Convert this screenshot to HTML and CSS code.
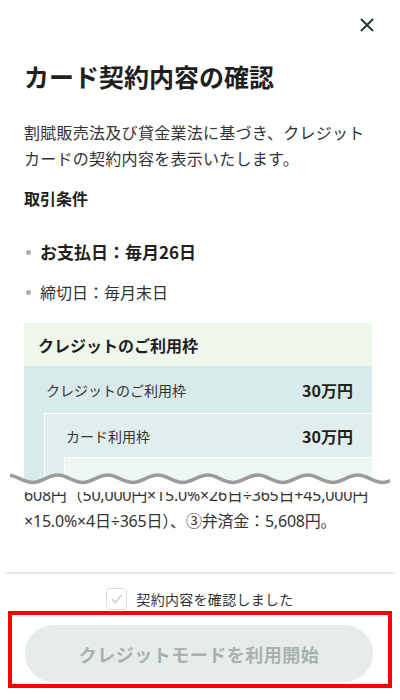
FILE: index.html
```html
<!DOCTYPE html>
<html lang="ja">
<head>
<meta charset="utf-8">
<title>カード契約内容の確認</title>
<link rel="stylesheet" href="styles.css">
</head>
<body>
<div class="sheet">
  <div class="topbar">
    <button class="close" aria-label="閉じる">
      <svg width="14" height="14" viewBox="0 0 14 14"><path d="M1 1L13 13M13 1L1 13" stroke="#1d3b2a" stroke-width="2" fill="none"/></svg>
    </button>
  </div>
  <main class="content">
    <h1 class="title">カード契約内容の確認</h1>
    <p class="lead">割賦販売法及び貸金業法に基づき、クレジットカードの契約内容を表示いたします。</p>
    <h2 class="section-title">取引条件</h2>
    <ul class="terms">
      <li class="term term-strong">お支払日：毎月26日</li>
      <li class="term">締切日：毎月末日</li>
    </ul>
    <div class="excerpt">
      <div class="excerpt-top">
        <div class="limit">
          <div class="limit-head">クレジットのご利用枠</div>
          <div class="limit-body">
            <div class="limit-row"><span>クレジットのご利用枠</span><strong>30万円</strong></div>
            <div class="limit-sub">
              <div class="limit-row"><span>カード利用枠</span><strong>30万円</strong></div>
              <div class="limit-sub limit-sub-2">
                <div class="limit-row limit-row-empty"></div>
              </div>
            </div>
          </div>
        </div>
      </div>
      <svg class="wave" viewBox="0 0 380 24" width="380" height="24" aria-hidden="true">
        <path class="wave-fill" d="M-2 7 C6.9 7 13.1 14.5 23 14.5 C31.9 14.5 38.1 7 48 7 C56.9 7 63.1 14.5 73 14.5 C81.9 14.5 88.1 7 98 7 C106.9 7 113.1 14.5 123 14.5 C131.9 14.5 138.1 7 148 7 C156.9 7 163.1 14.5 173 14.5 C181.9 14.5 188.1 7 198 7 C206.9 7 213.1 14.5 223 14.5 C231.9 14.5 238.1 7 248 7 C256.9 7 263.1 14.5 273 14.5 C281.9 14.5 288.1 7 298 7 C306.9 7 313.1 14.5 323 14.5 C331.9 14.5 338.1 7 348 7 C356.9 7 363.1 14.5 373 14.5 C381.9 14.5 388.1 7 398 7 L398 24 L-2 24 Z"/>
        <path class="wave-line" d="M-2 7 C6.9 7 13.1 14.5 23 14.5 C31.9 14.5 38.1 7 48 7 C56.9 7 63.1 14.5 73 14.5 C81.9 14.5 88.1 7 98 7 C106.9 7 113.1 14.5 123 14.5 C131.9 14.5 138.1 7 148 7 C156.9 7 163.1 14.5 173 14.5 C181.9 14.5 188.1 7 198 7 C206.9 7 213.1 14.5 223 14.5 C231.9 14.5 238.1 7 248 7 C256.9 7 263.1 14.5 273 14.5 C281.9 14.5 288.1 7 298 7 C306.9 7 313.1 14.5 323 14.5 C331.9 14.5 338.1 7 348 7 C356.9 7 363.1 14.5 373 14.5 C381.9 14.5 388.1 7 398 7"/>
      </svg>
      <div class="excerpt-bottom">
        <p class="excerpt-text">608円（50,000円×15.0%×26日÷365日+45,000円<br>×15.0%×4日÷365日）、③弁済金：5,608円。</p>
      </div>
    </div>
  </main>
  <footer class="footer">
    <label class="confirm">
      <span class="checkbox"><svg width="22" height="22" viewBox="0 0 22 22"><path d="M6 11.5L9.5 15L16 7.5" stroke="#cfd4d2" stroke-width="2" fill="none" stroke-linecap="round" stroke-linejoin="round"/></svg></span>
      <span class="confirm-label">契約内容を確認しました</span>
    </label>
    <button class="start" disabled>クレジットモードを利用開始</button>
    <div class="highlight"></div>
  </footer>
</div>
</body>
</html>
```
FILE: styles.css
```css
* { box-sizing: border-box; }
html, body { margin: 0; padding: 0; background: #fff; }
body {
  font-family: "Noto Sans CJK JP", "Noto Sans", sans-serif;
  color: #222;
}
.sheet {
  width: 400px;
  height: 700px;
  display: flex;
  flex-direction: column;
  overflow: hidden;
}
.topbar {
  flex: none;
  height: 50px;
  display: flex;
  justify-content: flex-end;
  align-items: center;
  padding-right: 25px;
}
.close {
  width: 16px;
  height: 16px;
  padding: 0;
  border: 0;
  background: none;
  display: flex;
  align-items: center;
  justify-content: center;
}
.content {
  flex: 1;
  padding: 0 28px 0 24px;
}
.title {
  margin: 9px 0 0;
  font-size: 25px;
  line-height: 34px;
  font-weight: 700;
  color: #1f1f1f;
}
.lead {
  margin: 26px 0 0;
  font-size: 16px;
  line-height: 26px;
  letter-spacing: 0.27px;
  color: #333;
}
.section-title {
  margin: 15px 0 0;
  font-size: 16px;
  line-height: 24px;
  font-weight: 700;
  color: #222;
}
.terms {
  list-style: none;
  margin: 30px 0 0;
  padding: 0;
  display: flex;
  flex-direction: column;
  gap: 16px;
}
.term {
  display: flex;
  align-items: center;
  gap: 9px;
  padding-left: 2px;
  font-size: 16px;
  line-height: 24px;
  color: #333;
}
.term::before {
  content: "";
  flex: none;
  width: 5px;
  height: 5px;
  border-radius: 50%;
  background: #acacac;
}
.term-strong {
  font-size: 17px;
  font-weight: 700;
  color: #1f1f1f;
}
.excerpt {
  position: relative;
  margin-top: 19px;
}
.excerpt-top {
  height: 163px;
  overflow: hidden;
}
.limit-head {
  height: 43px;
  display: flex;
  align-items: center;
  padding-left: 14px;
  background: #eff7ec;
  font-size: 16px;
  font-weight: 700;
  color: #1f1f1f;
}
.limit-body {
  background: #d8eaea;
}
.limit-row {
  display: flex;
  justify-content: space-between;
  align-items: center;
  padding: 0 19px 0 22px;
  font-size: 14px;
  color: #333;
}
.limit-body > .limit-row {
  height: 47px;
}
.limit-row strong {
  font-size: 16px;
  font-weight: 700;
  color: #1f1f1f;
}
.limit-sub {
  margin-left: 20px;
  background: #e0eeee;
  border-top: 1px solid #fff;
  border-left: 1px solid #fff;
}
.limit-sub > .limit-row {
  height: 43px;
  padding-left: 21px;
}
.limit-sub-2 {
  margin-left: 19px;
  background: #eef6f6;
}
.limit-sub-2 > .limit-row {
  height: 66px;
}
.wave {
  position: absolute;
  left: -14px;
  top: 145px;
  width: 380px;
  height: 24px;
}
.wave-fill { fill: #fff; }
.wave-line {
  fill: none;
  stroke: #9b9b9b;
  stroke-width: 3.5;
}
.excerpt-bottom {
  height: 48px;
  overflow: hidden;
  display: flex;
  flex-direction: column;
  justify-content: flex-end;
}
.excerpt-text {
  margin: 0;
  font-family: "Noto Sans", "Noto Sans CJK JP", sans-serif;
  font-size: 16px;
  line-height: 26px;
  letter-spacing: -0.2px;
  white-space: nowrap;
  color: #333;
}
.footer {
  flex: none;
  position: relative;
  height: 128px;
  margin: 0 5px;
  border-top: 2px solid #e8e8e8;
  display: flex;
  flex-direction: column;
  align-items: center;
}
.confirm {
  margin-top: 13px;
  height: 24px;
  display: flex;
  align-items: center;
  gap: 9px;
}
.checkbox {
  width: 21px;
  height: 22px;
  border: 1.5px solid #dcdedd;
  border-radius: 4px;
  background: #fff;
  display: flex;
  align-items: center;
  justify-content: center;
}
.checkbox svg { width: 20px; height: 20px; }
.confirm-label {
  font-size: 14px;
  letter-spacing: 0.3px;
  color: #333;
}
.start {
  align-self: flex-start;
  margin: 14px 0 0 20px;
  width: 348px;
  height: 57px;
  border: 0;
  border-radius: 29px;
  background: #e6ecea;
  color: #a9b1ae;
  font-family: "Noto Sans CJK JP", "Noto Sans", sans-serif;
  font-size: 18px;
  font-weight: 700;
  letter-spacing: 0.5px;
}
.highlight {
  position: absolute;
  left: 3px;
  top: 37px;
  width: 384px;
  height: 77px;
  border: 4px solid #ff0000;
  pointer-events: none;
}
```
